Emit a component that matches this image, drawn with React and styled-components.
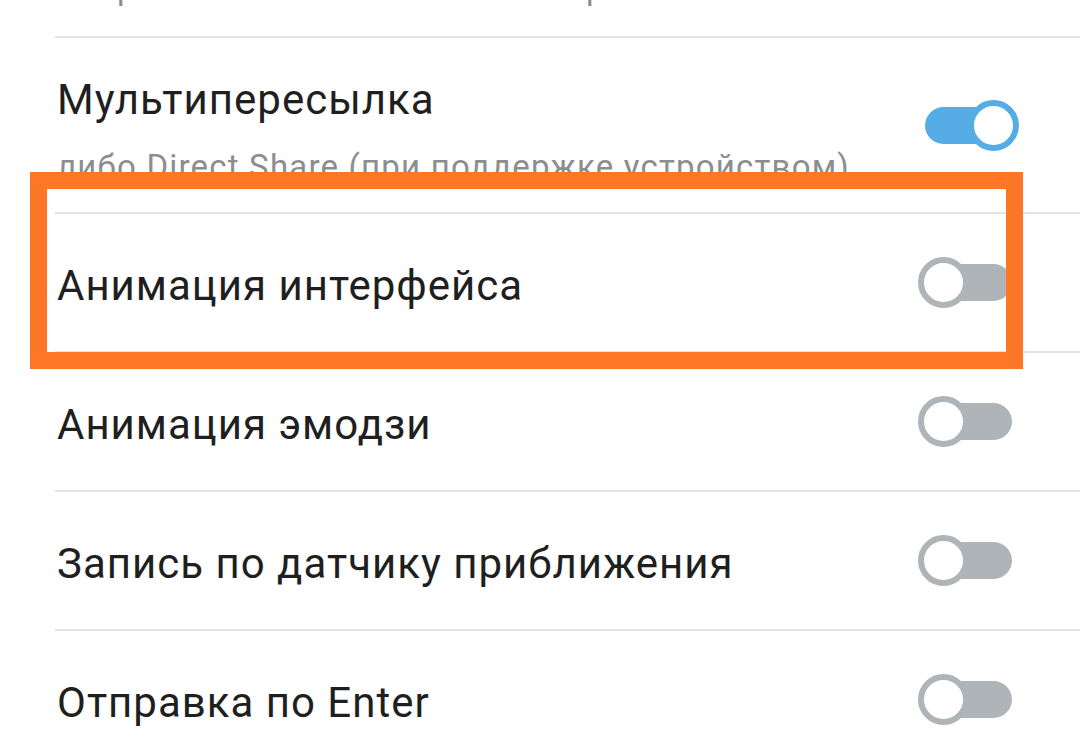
import React from 'react';
import styled, { createGlobalStyle } from 'styled-components';

const GlobalStyle = createGlobalStyle`
    html, body {
        margin: 0;
        padding: 0;
        background: #ffffff;
        overflow: hidden;
    }
    body {
        font-family: Roboto, "Noto Sans", sans-serif;
    }
`;

// the list is scrolled: the first row is mostly above the top edge
const rows = [
    { title: 'Встроенный браузер', subtitle: 'Открывать внешние ссылки в приложении', on: true },
    { title: 'Мультипересылка', subtitle: 'либо Direct Share (при поддержке устройством)', on: true },
    { title: 'Анимация интерфейса', on: false },
    { title: 'Анимация эмодзи', on: false },
    { title: 'Запись по датчику приближения', on: false },
    { title: 'Отправка по Enter', on: false },
];

const Switch = ({ on }) => (
    <SwitchBox>
        <Track on={on ? 1 : 0} />
        <Knob on={on ? 1 : 0} />
    </SwitchBox>
);

export default function App() {
    return (
        <Screen>
            <GlobalStyle />
            <List>
                {rows.map((row, i) => (
                    <Row key={row.title} tall={row.subtitle ? 1 : 0} first={i === 0 ? 1 : 0}>
                        <Texts tall={row.subtitle ? 1 : 0}>
                            <Title>{row.title}</Title>
                            {row.subtitle && <Subtitle>{row.subtitle}</Subtitle>}
                        </Texts>
                        <Switch on={row.on} />
                    </Row>
                ))}
            </List>
            <Highlight />
        </Screen>
    );
}

const Screen = styled.div`
    position: relative;
    width: 1080px;
    height: 739px;
    overflow: hidden;
    background: #ffffff;
`;

const List = styled.div`
    display: flex;
    flex-direction: column;
    margin-top: -143px;
`;

const Row = styled.div`
    display: flex;
    align-items: center;
    justify-content: space-between;
    height: ${props => (props.first ? '179px' : props.tall ? '176px' : '139px')};
    margin-left: 55px;
    padding-right: 68px;
    box-sizing: border-box;
    border-top: ${props => (props.first ? 'none' : '2px solid #e3e3e3')};
`;

const Texts = styled.div`
    display: flex;
    flex-direction: column;
    gap: 22px;
    margin-left: 2px;
    padding-top: ${props => (props.tall ? '11px' : '6px')};
`;

const Title = styled.div`
    font-size: 42px;
    line-height: 50px;
    letter-spacing: 1px;
    color: #1f1f1f;
`;

const Subtitle = styled.div`
    font-size: 33px;
    line-height: 40px;
    letter-spacing: 1.2px;
    color: #8b8e90;
`;

const SwitchBox = styled.div`
    position: relative;
    width: 87px;
    height: 51px;
    flex-shrink: 0;
`;

const Track = styled.div`
    position: absolute;
    left: 0;
    right: 0;
    top: 7px;
    height: 37px;
    border-radius: 18.5px;
    background: ${props => (props.on ? '#56ade6' : '#afb4b8')};
`;

const Knob = styled.div`
    position: absolute;
    top: 0;
    left: ${props => (props.on ? '43px' : '-7px')};
    width: 51px;
    height: 51px;
    box-sizing: border-box;
    border-radius: 50%;
    background: #ffffff;
    border: 6px solid ${props => (props.on ? '#56ade6' : '#afb4b8')};
`;

const Highlight = styled.div`
    position: absolute;
    left: 30px;
    top: 172px;
    width: 993px;
    height: 197px;
    box-sizing: border-box;
    border: 17px solid #ff7726;
    pointer-events: none;
`;
